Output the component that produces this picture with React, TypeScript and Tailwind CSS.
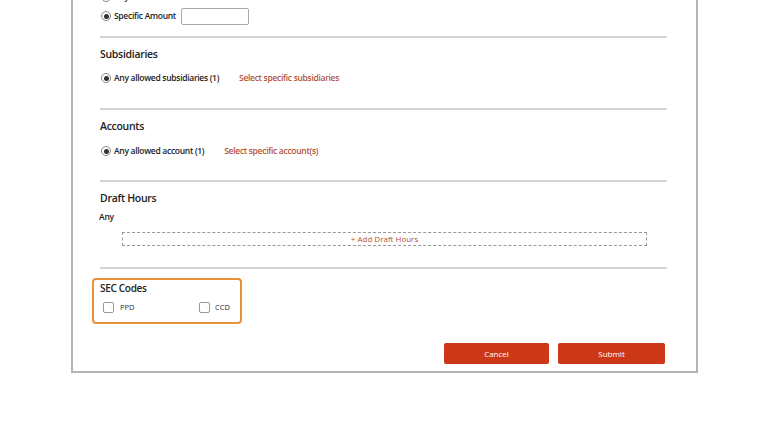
import React from "react"

function Radio() {
  return (
    <span className="flex h-[10px] w-[10px] shrink-0 items-center justify-center rounded-full border border-[#888] bg-white">
      <span className="h-[5px] w-[5px] rounded-full bg-[#333]" />
    </span>
  )
}

function Checkbox() {
  return <span className="block h-[11px] w-[11px] shrink-0 rounded-[2px] border border-[#999] bg-white" />
}

function Divider({ className = "" }: { className?: string }) {
  return <div className={`h-[2px] w-full bg-[#d4d4d4] ${className}`} />
}

function SectionHeading({ title, className = "" }: { title: string; className?: string }) {
  return (
    <div className={`flex h-[20px] items-center text-[10.5px] font-semibold tracking-[-0.3px] text-[#222] ${className}`}>
      {title}
    </div>
  )
}

function ChoiceRow({ label, link, className = "" }: { label: string; link: string; className?: string }) {
  return (
    <div className={`flex h-[20px] items-center gap-[20px] pl-[1px] ${className}`}>
      <div className="flex items-center gap-[3px]">
        <Radio />
        <span className="text-[8.5px] font-semibold tracking-[-0.3px] text-[#222]">{label}</span>
      </div>
      <a className="text-[8.5px] font-semibold tracking-[-0.3px] text-[#b4523a]">{link}</a>
    </div>
  )
}

export default function App() {
  return (
    <div
      className="h-[432px] w-full overflow-hidden bg-white"
      style={{ fontFamily: '"Open Sans", "Noto Sans", sans-serif' }}
    >
      <div className="-mt-[12px] ml-[71px] w-[627px] border-x-2 border-b-2 border-[#b4b4b4] bg-white pb-[7px] pl-[27px] pr-[29px]">
        <div className="flex h-[18px] items-center gap-[3px] pl-[1px]">
          <Radio />
          <span className="text-[8.5px] font-semibold tracking-[-0.3px] text-[#222]">Any draft amount</span>
        </div>
        <div className="flex h-[20px] items-center gap-[3px] pl-[1px]">
          <Radio />
          <span className="text-[8.5px] font-semibold tracking-[-0.3px] text-[#222]">Specific Amount</span>
          <input className="ml-[2px] h-[17px] w-[68px] rounded-[2px] border border-[#aaa] bg-white" />
        </div>
        <Divider className="mt-[10px]" />

        <SectionHeading title="Subsidiaries" className="mt-[7px]" />
        <ChoiceRow label="Any allowed subsidiaries (1)" link="Select specific subsidiaries" className="mt-[3px]" />
        <Divider className="mt-[20px]" />

        <SectionHeading title="Accounts" className="mt-[7px]" />
        <ChoiceRow label="Any allowed account (1)" link="Select specific account(s)" className="mt-[4px]" />
        <Divider className="mt-[19px]" />

        <SectionHeading title="Draft Hours" className="mt-[7px]" />
        <div className="-ml-[1px] flex h-[16px] items-center text-[8.5px] font-semibold tracking-[-0.2px] text-[#222]">
          Any
        </div>
        <div className="ml-[22px] mt-[7px] flex h-[14px] w-[525px] items-center justify-center border border-dashed border-[#999] text-[8px] text-[#b4523a]">
          + Add Draft Hours
        </div>
        <Divider className="mt-[21px]" />

        <div className="-ml-[8px] mt-[9px] h-[46px] w-[150px] rounded-[4px] border-2 border-[#e8913a] pl-[6px] pt-[1px]">
          <div className="flex h-[15px] items-center text-[10px] font-semibold tracking-[-0.3px] text-[#222]">SEC Codes</div>
          <div className="mt-[6px] flex items-center pl-[3px]">
            <div className="flex w-[96px] items-center gap-[6px]">
              <Checkbox />
              <span className="text-[7.5px] text-[#333]">PPD</span>
            </div>
            <div className="flex items-center gap-[5px]">
              <Checkbox />
              <span className="text-[7.5px] text-[#333]">CCD</span>
            </div>
          </div>
        </div>

        <div className="mt-[19px] flex justify-end gap-[9px] pr-[2px]">
          <button className="flex h-[21px] w-[105px] items-center justify-center rounded-[2px] bg-[#cc3717] text-[8px] text-white">
            Cancel
          </button>
          <button className="flex h-[21px] w-[107px] items-center justify-center rounded-[2px] bg-[#cc3717] text-[8px] text-white">
            Submit
          </button>
        </div>
      </div>
    </div>
  )
}
